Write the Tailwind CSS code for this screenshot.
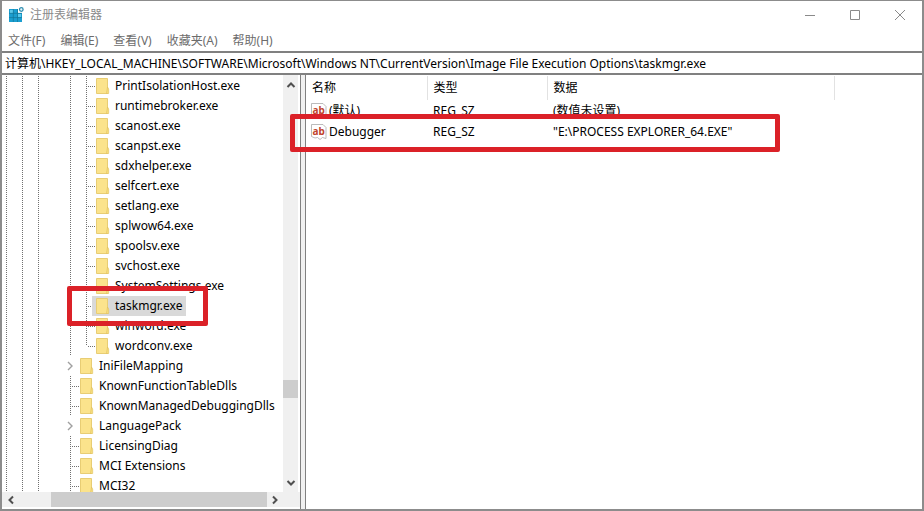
<!DOCTYPE html>
<html lang="zh-CN">

<head>
    <meta charset="UTF-8">
    <meta name="viewport" content="width=device-width, initial-scale=1.0">
    <title>注册表编辑器</title>
    <script src="https://cdn.jsdelivr.net/npm/@tailwindcss/browser@4"></script>
</head>

<body class="h-screen flex flex-col overflow-hidden border-t-1 border-x-2 border-b-2 border-[#8c8c8c] bg-white font-['Noto_Sans','Noto_Sans_CJK_SC',sans-serif] text-[12px] leading-5 text-black">
    <header class="flex h-7 items-center pl-1.5 text-[#8a8a8a]">
        <svg class="w-4 h-4 mr-1.5" viewBox="0 0 16 16">
            <path fill="#1b9ed0" d="M1 2h9v4h4v9H1z" />
            <path fill="#5cc8ea" d="M2 3h3v3H2zM10 7h3v3h-3z" />
            <path fill="none" stroke="#12708f" stroke-width=".6" d="M1 6.3h13M1 10.6h13M5.3 2v13M9.5 2v13" />
            <circle cx="13.3" cy="2.5" r="1.8" fill="#e8f7fc" stroke="#318eb0" stroke-width="1.3" />
        </svg>
        <h1>注册表编辑器</h1>
        <div class="ml-auto flex h-full text-[#8a8a8a]">
            <button aria-label="最小化" class="w-[45px] flex items-center justify-center"><svg class="w-3 h-3" viewBox="0 0 12 12" fill="none" stroke="currentColor"><path d="M1 6.5h10" /></svg></button>
            <button aria-label="最大化" class="w-[45px] flex items-center justify-center"><svg class="w-3 h-3" viewBox="0 0 12 12" fill="none" stroke="currentColor"><path d="M1.5 1.5h9v9h-9z" /></svg></button>
            <button aria-label="关闭" class="w-[45px] flex items-center justify-center"><svg class="w-3 h-3" viewBox="0 0 12 12" fill="none" stroke="currentColor"><path d="M1 1l10 10M11 1L1 11" /></svg></button>
        </div>
    </header>
    <nav class="flex h-[22px] items-end gap-[15px] pl-1.5 text-[#6c6c6c]">
        <button>文件(F)</button>
        <button>编辑(E)</button>
        <button>查看(V)</button>
        <button>收藏夹(A)</button>
        <button>帮助(H)</button>
    </nav>
    <input aria-label="地址" class="h-6 w-full shrink-0 border-y-2 border-[#808080] bg-white pl-[3px] outline-none" value="计算机\HKEY_LOCAL_MACHINE\SOFTWARE\Microsoft\Windows NT\CurrentVersion\Image File Execution Options\taskmgr.exe">

    <main class="flex flex-1 min-h-0 bg-[#f0f0f0]">
        <section class="w-[299px] shrink-0 flex flex-col border-r border-[#808080] bg-white">
            <div class="flex flex-1 min-h-0">
                <ul id="tree" class="flex-1 min-w-0 overflow-hidden pt-px pl-1"></ul>
                <div class="w-[15px] mr-0.5 shrink-0 flex flex-col items-center bg-[#f0f0f0]">
                    <button aria-label="向上滚动" class="h-5 flex items-center"><svg class="w-2.5 h-2.5" viewBox="0 0 10 10" fill="none" stroke="#505050" stroke-width="2"><path d="M1.5 7L5 3.5 8.5 7" /></svg></button>
                    <div class="flex-1 w-full flex flex-col">
                        <div class="grow-[284]"></div>
                        <div class="h-[18px] bg-[#cdcdcd]"></div>
                        <div class="grow-[76]"></div>
                    </div>
                    <button aria-label="向下滚动" class="h-[18px] flex items-center"><svg class="w-2.5 h-2.5" viewBox="0 0 10 10" fill="none" stroke="#505050" stroke-width="2"><path d="M1.5 3L5 6.5 8.5 3" /></svg></button>
                </div>
            </div>
            <div class="h-[15px] mb-0.5 shrink-0 flex items-center bg-[#f0f0f0]">
                <button aria-label="向左滚动" class="w-[18px] flex justify-center"><svg class="w-2.5 h-2.5" viewBox="0 0 10 10" fill="none" stroke="#505050" stroke-width="2"><path d="M7 1.5L3.5 5 7 8.5" /></svg></button>
                <div class="h-full ml-[31px] flex-1 bg-[#cdcdcd]"></div>
                <button aria-label="向右滚动" class="w-4 mr-[17px] flex justify-center"><svg class="w-2.5 h-2.5" viewBox="0 0 10 10" fill="none" stroke="#505050" stroke-width="2"><path d="M3 1.5L6.5 5 3 8.5" /></svg></button>
            </div>
        </section>

        <section class="relative ml-1 flex-1 border-l border-[#808080] bg-white pt-px">
            <table class="table-fixed border-collapse text-left">
                <colgroup>
                    <col class="w-[121px]">
                    <col class="w-[120px]">
                    <col class="w-[287px]">
                </colgroup>
                <thead>
                    <tr class="h-6">
                        <th class="p-0 pl-1.5 font-normal border-r border-[#e2e2e2]">名称</th>
                        <th class="p-0 pl-1.5 font-normal border-r border-[#e2e2e2]">类型</th>
                        <th class="p-0 pl-1.5 font-normal border-r border-[#e2e2e2]">数据</th>
                    </tr>
                </thead>
                <tbody id="values"></tbody>
            </table>
            <div class="absolute z-10 -left-4 top-[39px] w-[490px] h-[38px] rounded-xs border-5 border-[#db2128]"></div>
        </section>
    </main>

    <template id="folder">
        <svg class="w-3.5 h-4 shrink-0" viewBox="0 0 14 16">
            <path fill="#fbe38c" stroke="#e8cd74" d="M.5.5h11v15H.5z" />
            <path fill="#f8df80" stroke="#dfbf5c" stroke-width=".6" d="M11.5 9l1.2 2v4.5H10.5z" />
        </svg>
    </template>
    <template id="string-icon">
        <svg class="w-4 h-4 shrink-0" viewBox="0 0 16 16">
            <path fill="#fff" stroke="#a9a9a9" stroke-width=".8" d="M.5.5h11.5l3 3v11l-3.5-1-2.5 2-2.5-2-2.5.5-3.5-1.5z" />
            <text x="1.5" y="10.5" fill="#c0452c" font-family="Noto Sans" font-size="10" font-weight="700">ab</text>
        </svg>
    </template>

    <script>
        const deep = ['PrintIsolationHost.exe', 'runtimebroker.exe', 'scanost.exe', 'scanpst.exe', 'sdxhelper.exe',
            'selfcert.exe', 'setlang.exe', 'splwow64.exe', 'spoolsv.exe', 'svchost.exe', 'SystemSettings.exe',
            'taskmgr.exe', 'winword.exe', 'wordconv.exe'];
        const shallow = ['IniFileMapping', 'KnownFunctionTableDlls', 'KnownManagedDebuggingDlls', 'LanguagePack',
            'LicensingDiag', 'MCI Extensions', 'MCI32'];
        const folder = document.getElementById('folder').innerHTML;
        // dotted vertical line, one dot every second pixel
        const dots = '<span class="w-px h-full shrink-0 bg-[repeating-linear-gradient(180deg,#707070_0px_1px,transparent_1px_2px)]"></span>';
        const halfDots = '<span class="w-px h-2.5 self-start shrink-0 bg-[repeating-linear-gradient(180deg,#707070_0px_1px,transparent_1px_2px)]"></span>';
        const dash = '<span class="w-2 h-px bg-[repeating-linear-gradient(90deg,transparent_0px_1px,#707070_1px_2px)]"></span>';
        const guide = `<span class="w-4 h-5 shrink-0 flex">${dots}</span>`;
        const gap = '<span class="w-4 shrink-0"></span>';
        const arrow = '<button aria-label="展开" class="w-2.5 -ml-1 mr-1 shrink-0"><svg class="w-2.5 h-2.5" viewBox="0 0 10 10" fill="none" stroke="#a0a0a0" stroke-width="1.4"><path d="M2 1l4 4-4 4"/></svg></button>';
        const branch = `<span class="w-2.5 h-5 shrink-0 flex items-center">${dots}${dash}</span>`;
        const lastBranch = `<span class="w-2.5 h-5 shrink-0 flex items-center">${halfDots}${dash}</span>`;

        let html = '';
        deep.forEach((name, i) => {
            const selected = name == 'taskmgr.exe';
            html += `<li class="relative h-5 flex items-center whitespace-nowrap">${guide}${guide}${guide}${gap}${guide}
                ${i == deep.length - 1 ? lastBranch : branch}
                <span class="${selected ? 'h-5 flex items-center -ml-1 pl-1 pr-1 bg-[#d9d9d9]' : 'h-5 flex items-center'}">${folder}<span class="pl-[5px]">${name}</span></span>
                ${selected ? '<span class="absolute z-10 left-[61px] -top-2.5 w-[141px] h-10 rounded-xs border-5 border-[#db2128]"></span>' : ''}
            </li>`;
        });
        shallow.forEach(name => {
            const parent = name == 'IniFileMapping' || name == 'LanguagePack';
            html += `<li class="h-5 flex items-center whitespace-nowrap">${guide}${guide}${guide}${gap}
                ${parent ? arrow : branch}${folder}<span class="pl-[5px]">${name}</span></li>`;
        });
        document.getElementById('tree').innerHTML = html;

        const values = [
            ['(默认)', 'REG_SZ', '(数值未设置)'],
            ['Debugger', 'REG_SZ', '"E:\\PROCESS EXPLORER_64.EXE"'],
        ];
        const icon = document.getElementById('string-icon').innerHTML;
        document.getElementById('values').innerHTML = values.map(([name, type, data]) => `<tr class="h-[21px]">
            <td class="p-0 pl-[5px]"><span class="flex items-center gap-0.5">${icon}${name}</span></td>
            <td class="p-0 pl-1.5">${type}</td>
            <td class="p-0 pl-1.5 whitespace-nowrap">${data}</td>
        </tr>`).join('');
    </script>
</body>

</html>
